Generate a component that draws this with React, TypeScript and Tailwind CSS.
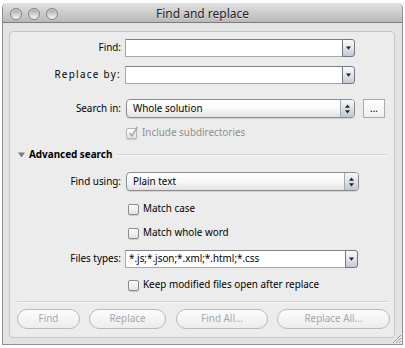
import React from 'react';

function ArrowDown() {
    return (
        <svg width="5" height="4" viewBox="0 0 5 4">
            <path d="M0 0.5 L5 0.5 L2.5 3.8 Z" fill="#222" />
        </svg>
    );
}

function UpDown() {
    return (
        <svg width="5" height="10" viewBox="0 0 5 10">
            <path d="M2.5 0.5 L5 3.8 L0 3.8 Z" fill="#222" />
            <path d="M0 6.2 L5 6.2 L2.5 9.5 Z" fill="#222" />
        </svg>
    );
}

function ComboBox({ width, value }: { width: string; value?: string }) {
    return (
        <div className={`flex h-[18px] ${width}`}>
            <div className="flex-1 flex items-center pl-[3px] bg-white border border-[#a8a8a8] border-t-[#808080] text-black">
                {value}
            </div>
            <div className="w-[13px] -ml-px flex items-center justify-center rounded-r-[3px] border border-[#6f7884] bg-linear-to-b from-[#fbfbfc] via-[#e3e6ea] to-[#c3c9d1]">
                <ArrowDown />
            </div>
        </div>
    );
}

function Popup({ width, value }: { width: string; value: string }) {
    return (
        <div className={`flex h-[19px] ${width} rounded-[4px] border border-[#8c8c8c] bg-linear-to-b from-white via-[#f9f9f9] to-[#e2e2e2] shadow-[0_1px_1px_rgba(0,0,0,0.12)]`}>
            <div className="flex-1 flex items-center pl-[6px] text-black">{value}</div>
            <div className="w-[14px] flex items-center justify-center rounded-r-[3px] border-l border-[#a3a9b1] bg-linear-to-b from-[#f6f7f9] via-[#dde1e6] to-[#c2c8d0]">
                <UpDown />
            </div>
        </div>
    );
}

function Checkbox({ checked, disabled }: { checked?: boolean; disabled?: boolean }) {
    return (
        <div
            className={`relative w-[11px] h-[11px] rounded-[2px] border bg-linear-to-b from-white to-[#e2e2e2] shadow-[0_1px_1px_rgba(0,0,0,0.15)] ${
                disabled ? 'border-[#b5b5b5]' : 'border-[#8a8a8a]'
            }`}
        >
            {checked && (
                <svg className="absolute -top-[3px] left-[1px]" width="11" height="12" viewBox="0 0 11 12">
                    <path d="M1.5 7 L4 10 L9.5 1" fill="none" stroke={disabled ? '#a8a8a8' : '#222'} strokeWidth="1.6" />
                </svg>
            )}
        </div>
    );
}

function Label({ children }: { children: React.ReactNode }) {
    return <div className="w-[111px] text-right text-black">{children}</div>;
}

function PillButton({ width, children }: { width: string; children: React.ReactNode }) {
    return (
        <div className={`${width} h-[20px] flex items-center justify-center rounded-full border border-[#b9b9b9] bg-linear-to-b from-[#fdfdfd] to-[#ececec] text-[#a6a6a6]`}>
            {children}
        </div>
    );
}

export default function App() {
    return (
        <div className="w-[405px] h-[348px] bg-white pt-[3px] pl-[2px] font-['Noto_Sans',sans-serif] text-[9.9px] leading-none">
            <div className="relative w-[401px] h-[342px] flex flex-col rounded-t-[5px] border border-t-0 border-[#8e8e8e] bg-[#e3e3e3] overflow-hidden">
                {/* title bar */}
                <div className="relative h-[20px] flex items-center justify-center border-b border-[#7d7d7d] bg-linear-to-b from-[#e2e2e2] to-[#b9b9b9]">
                    <div className="absolute left-[7px] top-[5px] flex gap-[6px]">
                        {[0, 1, 2].map((i) => (
                            <div
                                key={i}
                                className="w-[12px] h-[12px] rounded-full border border-[#808080] bg-linear-to-b from-[#9a9a9a] via-[#d0d0d0] to-[#f6f6f6] shadow-[inset_0_1px_1px_rgba(255,255,255,0.6)]"
                            />
                        ))}
                    </div>
                    <span className="text-[12px] text-[#1f1f1f] mt-[3px] [text-shadow:0_1px_0_rgba(255,255,255,0.5)]">Find and replace</span>
                </div>

                {/* group box */}
                <div className="ml-[6px] mt-[8px] w-[386px] h-[307px] rounded-[4px] border border-[#c6c6c6] bg-[#ececec] flex flex-col pt-[6px]">
                    <div className="flex items-center h-[19px]">
                        <Label>Find:</Label>
                        <div className="ml-[4px]"><ComboBox width="w-[230px]" /></div>
                    </div>
                    <div className="flex items-center h-[19px] mt-[8px]">
                        <Label><span className="tracking-[1.3px]">Replace by:</span></Label>
                        <div className="ml-[4px]"><ComboBox width="w-[230px]" /></div>
                    </div>
                    <div className="flex items-center h-[19px] mt-[15px]">
                        <Label>Search in:</Label>
                        <div className="ml-[5px]"><Popup width="w-[229px]" value="Whole solution" /></div>
                        <div className="ml-[8px] w-[22px] h-[19px] flex items-end justify-center pb-[3px] border border-[#ababab] bg-linear-to-b from-white to-[#efefef] text-black">...</div>
                    </div>
                    <div className="flex items-center h-[18px] mt-[6px]">
                        <div className="ml-[116px]"><Checkbox checked disabled /></div>
                        <span className="ml-[5px] text-[#8e8e8e]">Include subdirectories</span>
                    </div>
                    <div className="flex items-center h-[18px] mt-[4px]">
                        <svg className="ml-[8px]" width="7" height="6" viewBox="0 0 7 6">
                            <path d="M0 0.5 L7 0.5 L3.5 5.5 Z" fill="#7a7a7a" />
                        </svg>
                        <span className="ml-[4px] font-bold text-black">Advanced search</span>
                        <div className="flex-1 ml-[6px] mr-[8px] border-t border-[#d2d2d2] border-b border-b-[#f8f8f8]" />
                    </div>
                    <div className="flex items-center h-[19px] mt-[8px]">
                        <Label>Find using:</Label>
                        <div className="ml-[5px]"><Popup width="w-[233px]" value="Plain text" /></div>
                    </div>
                    <div className="flex items-center h-[18px] mt-[9px]">
                        <div className="ml-[118px]"><Checkbox /></div>
                        <span className="ml-[4px] text-black">Match case</span>
                    </div>
                    <div className="flex items-center h-[18px] mt-[6px]">
                        <div className="ml-[118px]"><Checkbox /></div>
                        <span className="ml-[4px] text-black">Match whole word</span>
                    </div>
                    <div className="flex items-center h-[18px] mt-[8px]">
                        <Label>Files types:</Label>
                        <div className="ml-[4px]"><ComboBox width="w-[233px]" value="*.js;*.json;*.xml;*.html;*.css" /></div>
                    </div>
                    <div className="flex items-center h-[18px] mt-[8px]">
                        <div className="ml-[118px]"><Checkbox /></div>
                        <span className="ml-[4px] text-black">Keep modified files open after replace</span>
                    </div>
                    <div className="mt-[7px] ml-[7px] w-[371px] border-t border-[#d2d2d2] border-b border-b-[#f8f8f8]" />
                    <div className="flex mt-[6px] ml-[7px]">
                        <PillButton width="w-[63px]">Find</PillButton>
                        <div className="ml-[9px]"><PillButton width="w-[77px]">Replace</PillButton></div>
                        <div className="ml-[10px]"><PillButton width="w-[92px]">Find All...</PillButton></div>
                        <div className="ml-[9px]"><PillButton width="w-[113px]">Replace All...</PillButton></div>
                    </div>
                </div>

                {/* resize grip */}
                <svg className="absolute right-[1px] bottom-[1px]" width="9" height="9" viewBox="0 0 9 9">
                    <path d="M9 1 L1 9 M9 4 L4 9 M9 7 L7 9" stroke="#8a8a8a" strokeWidth="0.8" />
                    <path d="M9 2 L2 9 M9 5 L5 9 M9 8 L8 9" stroke="#fafafa" strokeWidth="0.8" />
                </svg>
            </div>
        </div>
    );
}
